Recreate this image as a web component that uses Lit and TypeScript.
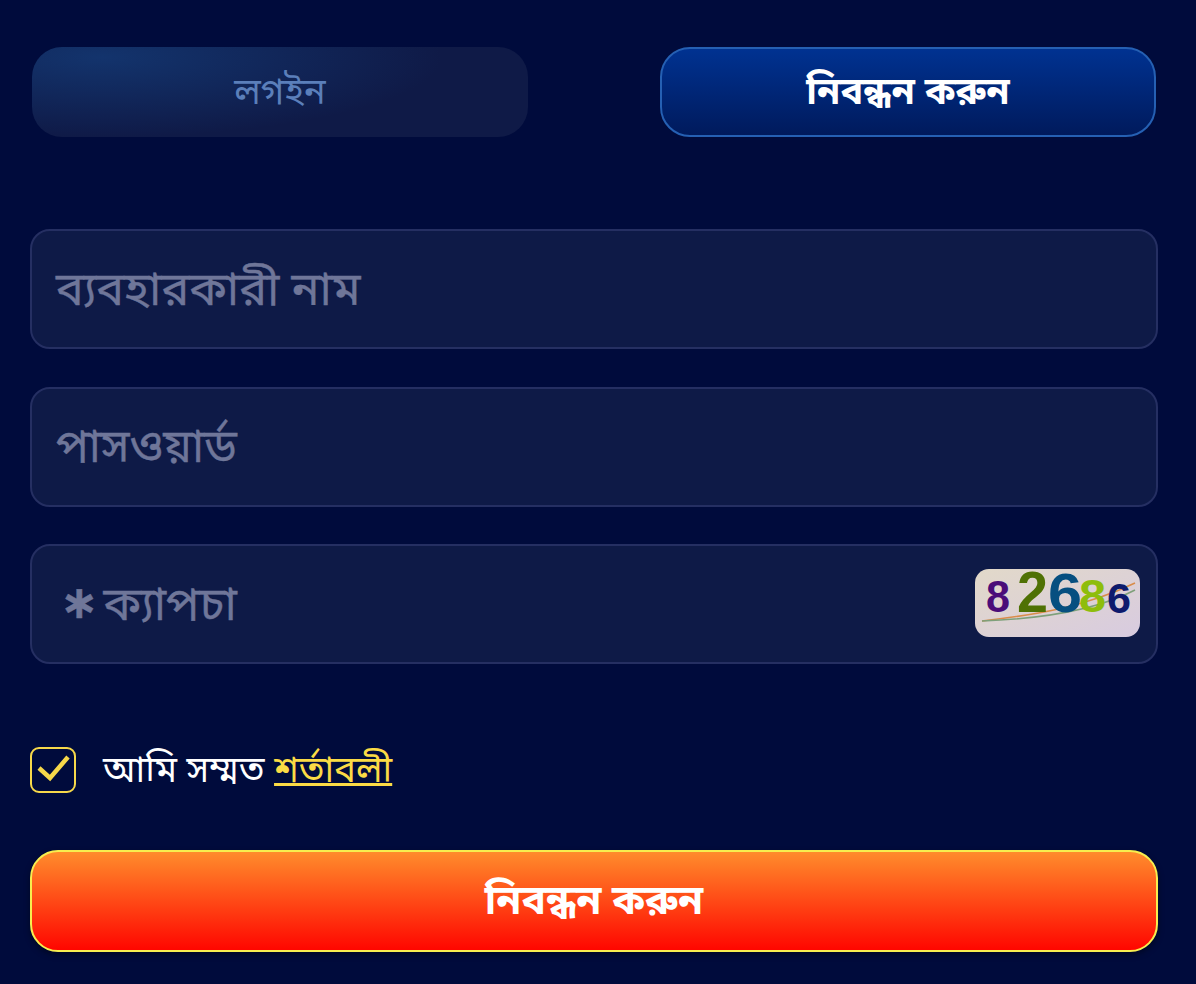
import { LitElement, html, css } from "lit";
import { customElement } from "lit/decorators.js";

@customElement("app-root")
export class AppRoot extends LitElement {
  static styles = css`
    :host {
      display: block;
      width: 1196px;
      height: 984px;
      background: #000b3c;
      font-family: "Noto Sans", "Noto Sans Bengali", "Liberation Sans", sans-serif;
      overflow: hidden;
      box-sizing: border-box;
      padding: 47px 38px 0 30px;
    }
    .tabs {
      display: flex;
      justify-content: space-between;
      padding: 0 2px;
    }
    .tab {
      width: 496px;
      height: 90px;
      box-sizing: border-box;
      border-radius: 30px;
      display: flex;
      align-items: center;
      justify-content: center;
      font-size: 36.4px;
      line-height: 1;
      padding-bottom: 3px;
    }
    .tab.off {
      color: #5b7fba;
      background:
        radial-gradient(ellipse 340px 80px at 70px 10px, rgba(20, 58, 118, 0.8), rgba(20, 58, 118, 0) 100%),
        #0f1a47;
    }
    .tab.on {
      color: #fff;
      font-weight: 700;
      font-size: 37.7px;
      padding-bottom: 5px;
      background: linear-gradient(180deg, #003291 0%, #001a5c 100%);
      border: 2px solid #2560b3;
    }
    .fields {
      display: flex;
      flex-direction: column;
      gap: 37.5px;
      margin-top: 92px;
    }
    .field {
      height: 120px;
      box-sizing: border-box;
      border: 2px solid #252f62;
      border-radius: 20px;
      background: #0e1a47;
      color: #6f7699;
      font-size: 46.6px;
      display: flex;
      align-items: center;
      padding: 0 24px 4px;
      line-height: 1;
      -webkit-text-stroke: 0.4px currentColor;
    }
    .field.tight {
      font-size: 45.8px;
    }
    .star {
      font-family: "DejaVu Sans", sans-serif;
      font-size: 46px;
      margin: 0 5px 0 4px;
      font-weight: 700;
    }
    .captcha {
      margin: 2px -8px 0 auto;
      width: 165px;
      height: 68px;
      display: block;
      flex: none;
      overflow: visible;
    }
    .captcha text {
      -webkit-text-stroke: 0;
    }
    .agree {
      display: flex;
      align-items: center;
      margin-top: 83px;
      height: 46px;
      font-size: 36.4px;
      color: #fff;
      gap: 27px;
    }
    .agree-text {
      padding-bottom: 1px;
    }
    .check {
      width: 46px;
      height: 46px;
      display: block;
      flex: none;
    }
    .link {
      color: #fbdb45;
      text-decoration: underline;
      text-underline-offset: 1px;
      text-decoration-thickness: 3px;
    }
    .submit {
      margin-top: 57px;
      height: 102px;
      box-sizing: border-box;
      border: 2px solid #f7ee4f;
      border-radius: 28px;
      background: linear-gradient(180deg, #ff8c2c 0%, #ff0600 100%);
      color: #fff;
      font-size: 40.5px;
      font-weight: 700;
      display: flex;
      align-items: center;
      justify-content: center;
      box-shadow: 0 3px 6px rgba(0, 0, 0, 0.4);
      line-height: 1;
      padding-bottom: 3px;
    }
  `;

  render() {
    return html`
      <div class="tabs">
        <div class="tab off">লগইন</div>
        <div class="tab on">নিবন্ধন করুন</div>
      </div>
      <div class="fields">
        <div class="field">ব্যবহারকারী নাম</div>
        <div class="field tight">পাসওয়ার্ড</div>
        <div class="field">
          <span class="star">∗</span>ক্যাপচা
          <svg class="captcha" viewBox="0 0 165 68">
            <defs>
              <linearGradient id="cg" x1="0" y1="0" x2="1" y2="1">
                <stop offset="0" stop-color="#e2d9c9" />
                <stop offset="1" stop-color="#d8cbe0" />
              </linearGradient>
            </defs>
            <rect width="165" height="68" rx="14" fill="url(#cg)" />
            <path d="M7 52 C60 46 110 38 160 14" stroke="#d98c4a" stroke-width="1.5" fill="none" />
            <path d="M7 52 C60 50 120 42 160 21" stroke="#7ea07a" stroke-width="1.5" fill="none" />
            <g font-family="'Liberation Sans','Noto Sans',sans-serif" font-weight="700">
              <text x="11" y="43" font-size="44" fill="#4a0d79" textLength="24" lengthAdjust="spacingAndGlyphs">8</text>
              <text x="42" y="43" font-size="58" fill="#4f7104" textLength="31" lengthAdjust="spacingAndGlyphs">2</text>
              <text x="73" y="43" font-size="55" fill="#064f80" textLength="34" lengthAdjust="spacingAndGlyphs">6</text>
              <text x="104" y="43" font-size="47" fill="#8ebd0c" textLength="27" lengthAdjust="spacingAndGlyphs">8</text>
              <text x="132" y="44" font-size="43" fill="#0d1a6d" textLength="24" lengthAdjust="spacingAndGlyphs">6</text>
            </g>
          </svg>
        </div>
      </div>
      <div class="agree">
        <svg class="check" viewBox="0 0 46 46">
          <rect x="1" y="1" width="44" height="44" rx="8" fill="none" stroke="#f6d84a" stroke-width="2" />
          <path d="M9 21 L20 31 L38 10" fill="none" stroke="#f6d84a" stroke-width="4.5" />
        </svg>
        <span class="agree-text">আমি সম্মত <span class="link">শর্তাবলী</span></span>
      </div>
      <div class="submit">নিবন্ধন করুন</div>
    `;
  }
}
